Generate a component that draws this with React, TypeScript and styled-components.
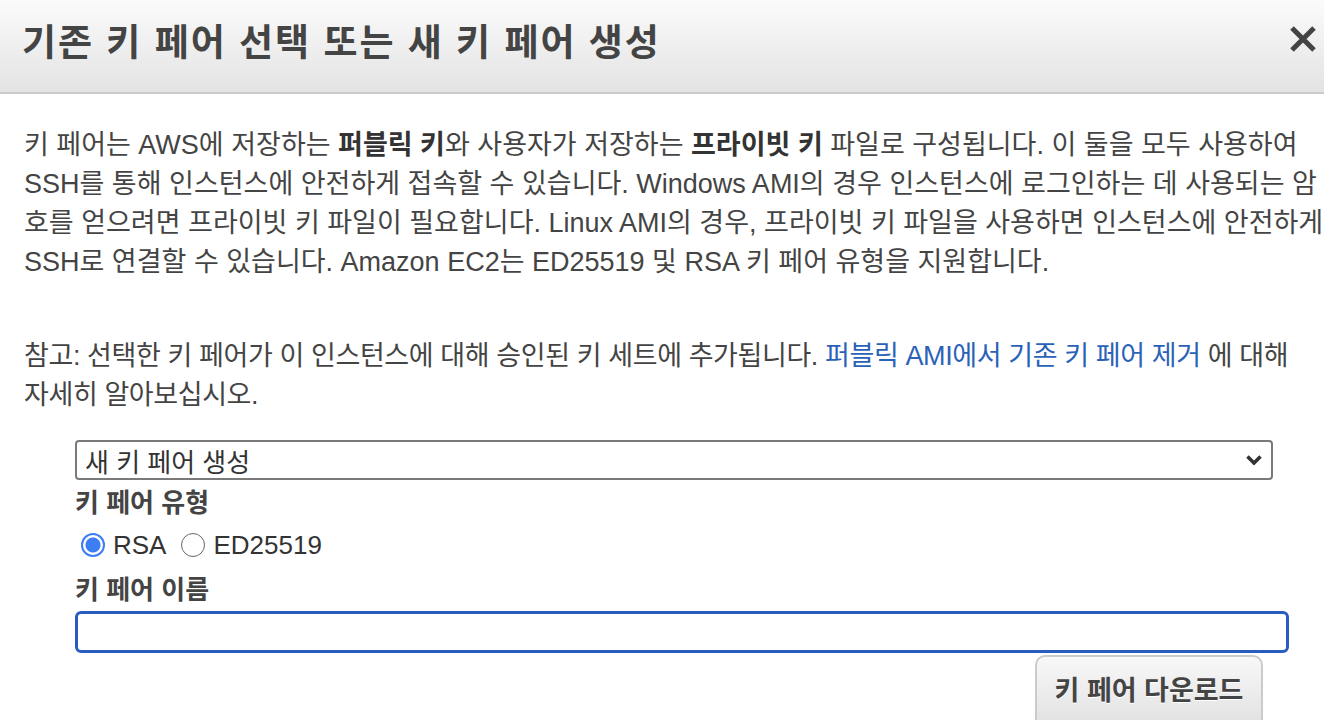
import React, { useState } from 'react'
import styled, { createGlobalStyle } from 'styled-components'

const GlobalStyle = createGlobalStyle`
  html, body {
    margin: 0;
    padding: 0;
    background: #fff;
  }
  body {
    font-family: "Liberation Sans", "Noto Sans CJK KR", sans-serif;
    color: #444;
    overflow: hidden;
  }
`

const Dialog = styled.div`
  width: 1324px;
  height: 720px;
  display: flex;
  flex-direction: column;
  overflow: hidden;
`

const Header = styled.div`
  height: 94px;
  flex-shrink: 0;
  display: flex;
  align-items: center;
  justify-content: space-between;
  padding: 0 4px 0 22px;
  background: linear-gradient(#fbfbfb, #e3e3e3);
  border-bottom: 2px solid #cbcbcb;
  box-sizing: border-box;
`

const Title = styled.h1`
  margin: 0 0 12px;
  font-size: 37px;
  letter-spacing: 2px;
  font-weight: 700;
  color: #444;
`

const CloseButton = styled.button`
  width: 34px;
  height: 34px;
  border: none;
  background: none;
  padding: 0;
  display: flex;
  align-items: center;
  justify-content: center;
  margin-bottom: 14px;
  cursor: pointer;
`

const Body = styled.div`
  padding: 32px 24px 0;
  display: flex;
  flex-direction: column;
`

const Paragraph = styled.p<{ $gap?: number; $tight?: boolean }>`
  margin: 0 0 ${(p) => p.$gap ?? 0}px;
  font-size: 27px;
  line-height: 39px;
  letter-spacing: ${(p) => (p.$tight ? '-0.4px' : '0')};
  color: #444;
  white-space: nowrap;
`

const Strong = styled.b`
  font-weight: 700;
  color: #333;
`

const Link = styled.a`
  color: #2a62b8;
  text-decoration: none;
  cursor: pointer;
`

const Form = styled.div`
  margin: 25px 0 0 51px;
  width: 1214px;
  display: flex;
  flex-direction: column;
`

const SelectBox = styled.div`
  width: 1198px;
  height: 40px;
  box-sizing: border-box;
  border: 2px solid #7a7a7a;
  border-radius: 4px;
  display: flex;
  align-items: center;
  justify-content: space-between;
  padding: 0 8px 0 8px;
  font-size: 26px;
  color: #333;
`

const FieldLabel = styled.div`
  margin-top: 7px;
  font-size: 26px;
  font-weight: 700;
  line-height: 32px;
  color: #444;
`

const RadioRow = styled.div`
  display: flex;
  align-items: center;
  height: 44px;
  margin-top: 4px;
  padding-left: 6px;
`

const RadioOption = styled.label`
  display: flex;
  align-items: center;
  font-size: 26px;
  color: #333;
  margin-right: 15px;
  cursor: pointer;
`

const RadioInput = styled.input`
  appearance: none;
  width: 24px;
  height: 24px;
  margin: 0 8px 0 0;
  border-radius: 50%;
  border: 1.5px solid #666;
  background: #fff;
  box-sizing: border-box;

  &:checked {
    border: 2px solid #3d7ef5;
    background: radial-gradient(circle, #3d7ef5 0 7px, #fff 8px);
  }
`

const NameInput = styled.input`
  margin-top: 5px;
  width: 1214px;
  height: 42px;
  box-sizing: border-box;
  border: 3px solid #2a5cc0;
  border-radius: 6px;
  outline: none;
  font-size: 26px;
  padding: 0 8px;
`

const Footer = styled.div`
  display: flex;
  justify-content: flex-end;
  padding-right: 37px;
  margin-top: 2px;
`

const DownloadButton = styled.button`
  width: 228px;
  height: 76px;
  border: 2px solid #cbcbcb;
  border-radius: 10px;
  background: linear-gradient(#f8f8f8, #e0e0e0);
  font-family: "Liberation Sans", "Noto Sans CJK KR", sans-serif;
  font-size: 27px;
  font-weight: 700;
  color: #444;
  text-shadow: 0 1px 0 #fff;
  padding: 0 0 10px;
  cursor: pointer;
`

export default function App() {
  const [keyType, setKeyType] = useState('rsa')
  return (
    <>
      <GlobalStyle />
      <Dialog>
        <Header>
          <Title>기존 키 페어 선택 또는 새 키 페어 생성</Title>
          <CloseButton aria-label="닫기">
            <svg width="28" height="28" viewBox="0 0 28 28">
              <path d="M3 3 L25 25 M25 3 L3 25" stroke="#444" strokeWidth="5" />
            </svg>
          </CloseButton>
        </Header>
        <Body>
          <Paragraph $gap={55}>
            키 페어는 AWS에 저장하는 <Strong>퍼블릭 키</Strong>와 사용자가 저장하는 <Strong>프라이빗 키</Strong> 파일로 구성됩니다. 이 둘을 모두 사용하여
            <br />
            SSH를 통해 인스턴스에 안전하게 접속할 수 있습니다. Windows AMI의 경우 인스턴스에 로그인하는 데 사용되는 암
            <br />
            호를 얻으려면 프라이빗 키 파일이 필요합니다. Linux AMI의 경우, 프라이빗 키 파일을 사용하면 인스턴스에 안전하게
            <br />
            SSH로 연결할 수 있습니다. Amazon EC2는 ED25519 및 RSA 키 페어 유형을 지원합니다.
          </Paragraph>
          <Paragraph $tight>
            참고: 선택한 키 페어가 이 인스턴스에 대해 승인된 키 세트에 추가됩니다. <Link>퍼블릭 AMI에서 기존 키 페어 제거</Link> 에 대해
            <br />
            자세히 알아보십시오.
          </Paragraph>
          <Form>
            <SelectBox>
              <span>새 키 페어 생성</span>
              <svg width="18" height="12" viewBox="0 0 18 12">
                <path d="M2.5 2.5 L9 9 L15.5 2.5" fill="none" stroke="#333" strokeWidth="3.5" />
              </svg>
            </SelectBox>
            <FieldLabel>키 페어 유형</FieldLabel>
            <RadioRow>
              <RadioOption>
                <RadioInput type="radio" name="kt" checked={keyType === 'rsa'} onChange={() => setKeyType('rsa')} />
                RSA
              </RadioOption>
              <RadioOption>
                <RadioInput type="radio" name="kt" checked={keyType === 'ed'} onChange={() => setKeyType('ed')} />
                ED25519
              </RadioOption>
            </RadioRow>
            <FieldLabel>키 페어 이름</FieldLabel>
            <NameInput type="text" />
          </Form>
          <Footer>
            <DownloadButton>키 페어 다운로드</DownloadButton>
          </Footer>
        </Body>
      </Dialog>
    </>
  )
}
